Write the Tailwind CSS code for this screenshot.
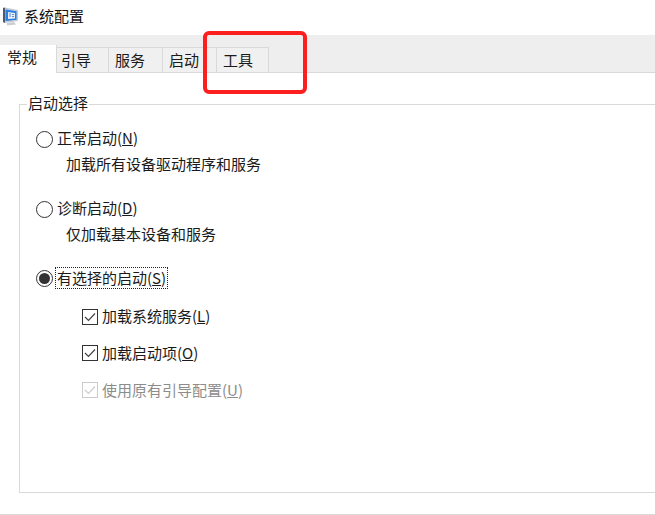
<!DOCTYPE html>
<html lang="zh-CN">
<head>
    <meta charset="UTF-8">
    <title>系统配置</title>
    <script src="https://cdn.jsdelivr.net/npm/@tailwindcss/browser@4"></script>
</head>
<body class="relative w-[655px] h-[515px] overflow-hidden bg-white text-[15px] leading-[24px] text-[#1a1a1a] font-['Noto_Sans_CJK_SC','Noto_Sans',sans-serif]">

    <!-- title bar -->
    <div class="h-[35px] flex items-center pl-[2px]">
        <svg class="w-[17px] h-[19px] -mt-[2px]" viewBox="0 0 17 19">
            <path d="M1 1 L3 0.5 L16 3 L16 14 L3 16 L1 15 Z" fill="#c3ccd6"/>
            <path d="M1 1 L3 0.5 L3 16 L1 15 Z" fill="#4b5a6e"/>
            <path d="M3.5 2.5 L14.5 4.2 L14.5 12.8 L3.5 14 Z" fill="#2a7de1"/>
            <path d="M6 5 L13 5.9 L13 11.5 L6 12 Z" fill="#e6f1fb"/>
            <path d="M7 7 H9 M7 9 H9 M10 7.5 H12 M10 9.5 H12" stroke="#5a8fd0" stroke-width="1"/>
            <path d="M5 16 L12 15 L14 17.5 L5 18.5 Z" fill="#c9ced3"/>
        </svg>
        <span class="ml-[5px] pb-[4px] text-[#111]">系统配置</span>
    </div>

    <!-- tabs -->
    <div class="h-[38px] bg-[#eeeeee] border-b border-[#d9d9d9] flex items-end">
        <div class="w-[57px] h-[28px] -mb-px bg-white border-r border-[#d9d9d9] pl-[7px] leading-[24px]">常规</div>
        <div class="w-[52px] h-[25px] bg-[#f0f0f0] border-t border-r border-[#d9d9d9] pl-[4px] leading-[23px]">引导</div>
        <div class="w-[54px] h-[25px] bg-[#f0f0f0] border-t border-r border-[#d9d9d9] pl-[6px] leading-[23px]">服务</div>
        <div class="w-[54px] h-[25px] bg-[#f0f0f0] border-t border-r border-[#d9d9d9] pl-[6px] leading-[23px]">启动</div>
        <div class="w-[52px] h-[25px] bg-[#f0f0f0] border-t border-r border-[#d9d9d9] pl-[6px] leading-[23px]">工具</div>
    </div>

    <!-- group box -->
    <div class="relative mt-[31px] ml-[19px] h-[389px] border-l border-t border-b border-[#d9d9d9] pl-[16px] pt-[22px]">
        <div class="absolute left-[7px] top-[-14px] bg-white px-[1px]">启动选择</div>

        <div class="h-[24px] flex items-center">
            <span class="w-[17px] h-[17px] rounded-full border border-[#333]"></span>
            <span class="ml-[4px] pb-[2px]">正常启动(<u>N</u>)</span>
        </div>
        <div class="h-[24px] mt-[2px] pl-[30px] leading-[22px]">加载所有设备驱动程序和服务</div>

        <div class="h-[24px] mt-[20px] flex items-center">
            <span class="w-[17px] h-[17px] rounded-full border border-[#333]"></span>
            <span class="ml-[4px] pb-[2px]">诊断启动(<u>D</u>)</span>
        </div>
        <div class="h-[24px] mt-[2px] pl-[30px] leading-[22px]">仅加载基本设备和服务</div>

        <div class="h-[24px] mt-[19px] flex items-center">
            <span class="w-[17px] h-[17px] rounded-full border border-[#333] flex items-center justify-center">
                <span class="w-[11px] h-[11px] rounded-full bg-[#333]"></span>
            </span>
            <span class="ml-[2px] px-[1px] h-[22px] leading-[19px] border border-dotted border-[#222]">有选择的启动(<u>S</u>)</span>
        </div>

        <div class="h-[24px] mt-[15px] ml-[46px] flex items-center">
            <svg class="w-[16px] h-[16px]" viewBox="0 0 16 16">
                <rect x="0.5" y="0.5" width="15" height="15" fill="#fff" stroke="#333"/>
                <path d="M3 8 L6.5 11.5 L13 4.5" fill="none" stroke="#444" stroke-width="1.2"/>
            </svg>
            <span class="ml-[4px] pb-[2px]">加载系统服务(<u>L</u>)</span>
        </div>
        <div class="h-[24px] mt-[12px] ml-[46px] flex items-center">
            <svg class="w-[16px] h-[16px]" viewBox="0 0 16 16">
                <rect x="0.5" y="0.5" width="15" height="15" fill="#fff" stroke="#333"/>
                <path d="M3 8 L6.5 11.5 L13 4.5" fill="none" stroke="#444" stroke-width="1.2"/>
            </svg>
            <span class="ml-[4px]">加载启动项(<u>O</u>)</span>
        </div>
        <div class="h-[24px] mt-[13px] ml-[46px] flex items-center text-[#8c8c8c]">
            <svg class="w-[16px] h-[16px]" viewBox="0 0 16 16">
                <rect x="0.5" y="0.5" width="15" height="15" fill="#fff" stroke="#cccccc"/>
                <path d="M3 8 L6.5 11.5 L13 4.5" fill="none" stroke="#cccccc" stroke-width="1.2"/>
            </svg>
            <span class="ml-[4px]">使用原有引导配置(<u>U</u>)</span>
        </div>
    </div>

    <div class="mt-[21px] border-t border-[#d9d9d9]"></div>

    <!-- red annotation round the tools tab -->
    <div class="absolute left-[203px] top-[31px] w-[104px] h-[63px] border-[4px] border-[#fb1f1f] rounded-[6px]"></div>
</body>
</html>
